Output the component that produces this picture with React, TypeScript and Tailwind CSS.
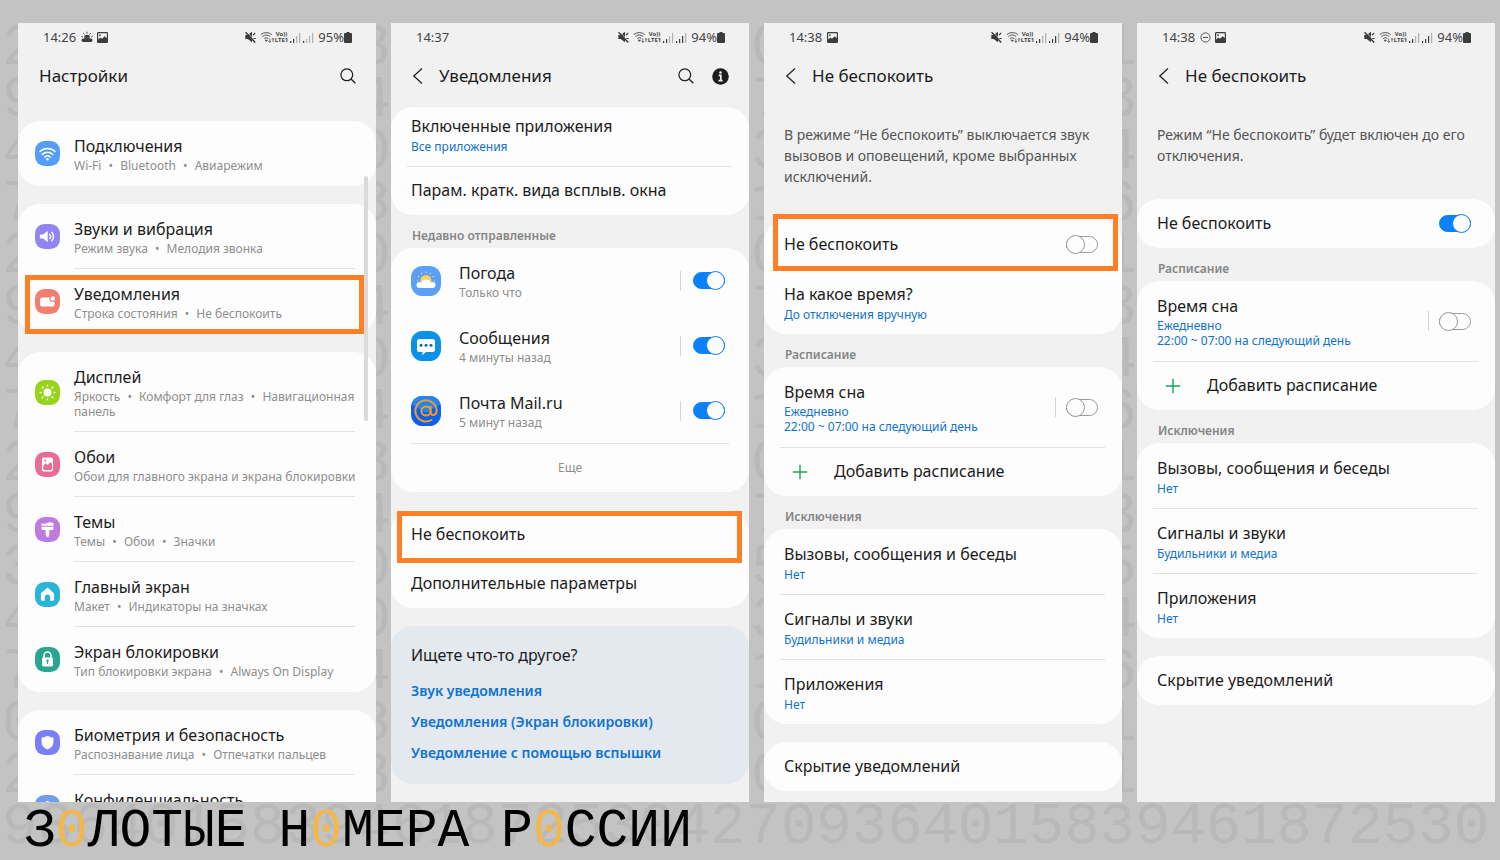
import React from 'react';

/* ---------- digit pattern behind the phones ---------- */

const GUTTERS = {
    left: '294729472934702',
    first: '840804048400488',
    second: '073107310753100',
    third: '134613461354611',
};

const BOTTOM_DIGITS = '936401583946187253042709364015839461872530';

interface GutterProps {
    digits: string;
    styleClass: string;
}

const Gutter: React.FC<GutterProps> = ({ digits, styleClass }) => (
    <div aria-hidden="true" className={`flex flex-col shrink-0 overflow-hidden font-['Liberation_Mono',monospace] text-[59px] leading-[52px] text-[#b9b9b9] select-none ${styleClass}`}>
        {digits.split('').map((digit, i) => (
            <span key={i}>{digit}</span>
        ))}
    </div>
);

/* ---------- status bar ---------- */

const WeatherStatusIcon = () => (
    <svg className="w-3 h-3" viewBox="0 0 12 12" fill="#3c3c3c">
        <path d="M3 6.800a3 3 0 0 1 6 0z" />
        <path d="M6 .8v1.600M2.400 2.200l1 1.200M9.600 2.200l-1 1.200M.4 5.400l1.500.5M11.600 5.400l-1.500.5" stroke="#3c3c3c" strokeWidth="1" />
        <path d="M2.200 11a1.700 1.700 0 0 1 0-3.400 2 2 0 0 1 1.600-.2 2.600 2.600 0 0 1 4.400 0 2 2 0 0 1 1.600.2 1.700 1.700 0 0 1 0 3.400z" />
    </svg>
);

const ImageStatusIcon = () => (
    <svg className="w-[11px] h-[11px]" viewBox="0 0 11 11">
        <path fillRule="evenodd" fill="#3c3c3c" d="M1.200 0h8.600A1.200 1.200 0 0 1 11 1.200v8.600A1.200 1.200 0 0 1 9.800 11H1.200A1.200 1.200 0 0 1 0 9.800V1.200A1.200 1.200 0 0 1 1.200 0zM1.200 1.200v6.200l2.300-2 1.500 1.400 2.700-2.600 2.100 2V1.200zM3 2.200a.9.9 0 1 1 0 1.800.9.9 0 0 1 0-1.800z" />
    </svg>
);

const DndStatusIcon = () => (
    <svg className="w-[11px] h-[11px]" viewBox="0 0 11 11" fill="none" stroke="#555">
        <circle cx="5.500" cy="5.500" r="4.600" />
        <path d="M3 5.500h5" />
    </svg>
);

const MuteIcon = () => (
    <svg className="w-[11px] h-3" viewBox="0 0 11 12">
        <path d="M.3 4h2.400L7 .8v10.400L2.700 8H.3z" fill="#3c3c3c" />
        <path d="M8 4.200l2.200-2.200M8 7.500h2.700" stroke="#3c3c3c" strokeWidth="1.200" />
        <path d="M1.400.6l9.400 10" stroke="#f1f1f1" strokeWidth=".9" />
        <path d="M.6 1.200l9.600 10.200" stroke="#3c3c3c" strokeWidth="1.500" />
    </svg>
);

const WifiStatusIcon = () => (
    <svg className="w-[15px] h-3" viewBox="0 0 15 12" fill="none" stroke="#555" strokeWidth="1">
        <path d="M.8 3.600a8.400 8.400 0 0 1 11 0M2.400 5.600a6 6 0 0 1 7.800 0M4.200 7.500a3.400 3.400 0 0 1 4.200 0" />
        <path d="M5.200 9.200l1.100 1.200 1.100-1.200z" fill="#555" />
        <path d="M9.800 7.500v4M8.600 10l1.200 1.400L11 10M13 11V7.500M12 8.600l1-1.200 1 1.200" strokeWidth=".8" />
    </svg>
);

const SignalIcon = ({ level }: { level: number }) => (
    <svg className="w-[11px] h-[11px]" viewBox="0 0 11 11">
        {[2, 4, 7, 10].map((h, i) => (
            <rect key={h} x={i * 3} y={11 - h} width="1.200" height={h} fill={i < level ? '#3c3c3c' : '#b0b0b0'} />
        ))}
    </svg>
);

const BatteryIcon = () => (
    <svg className="w-2 h-[11px]" viewBox="0 0 8 11" fill="#3c3c3c">
        <path d="M2.500 0h3v1H7a1 1 0 0 1 1 1v8a1 1 0 0 1-1 1H1a1 1 0 0 1-1-1V2a1 1 0 0 1 1-1h1.500z" />
    </svg>
);

interface StatusBarProps {
    time: string;
    battery: string;
    secondSignal: number;
    children?: React.ReactNode;
}

const StatusBar: React.FC<StatusBarProps> = ({ time, battery, secondSignal, children }) => (
    <div className="flex shrink-0 items-center justify-between h-7 pl-[25px] pr-6 text-[13px] leading-4 text-[#444]">
        <div className="flex items-center gap-x-1">
            <span className="mr-px">{time}</span>
            {children}
        </div>
        <div className="flex items-center">
            <MuteIcon />
            <span className="ml-1 flex"><WifiStatusIcon /></span>
            <span className="flex flex-col text-[6px] leading-[6px] font-bold text-center">
                <span>Vo))</span>
                <span>LTE1</span>
            </span>
            <span className="flex gap-x-0.5 ml-0.5 mr-1">
                <SignalIcon level={2} />
                <SignalIcon level={secondSignal} />
            </span>
            <span>{battery}</span>
            <BatteryIcon />
        </div>
    </div>
);

/* ---------- shared pieces ---------- */

const SearchIcon = () => (
    <svg className="w-4 h-4" viewBox="0 0 16 16" fill="none" stroke="#222" strokeWidth="1.300">
        <circle cx="6.800" cy="6.800" r="5.900" />
        <path d="M11 11l4.400 4.300" />
    </svg>
);

const InfoIcon = () => (
    <svg className="w-[17px] h-[17px]" viewBox="0 0 17 17">
        <circle cx="8.500" cy="8.500" r="8.300" fill="#1c1c1c" />
        <circle cx="8.500" cy="4.500" r="1.300" fill="#f1f1f1" />
        <path d="M6.700 7.400h2.100v5M6.500 12.600h4.200" fill="none" stroke="#f1f1f1" strokeWidth="1.700" />
    </svg>
);

interface TitleBarProps {
    title: string;
    back?: boolean;
    children?: React.ReactNode;
}

const TitleBar: React.FC<TitleBarProps> = ({ title, back, children }) => (
    <div className="flex shrink-0 items-center h-[50px] pl-[21px] pr-5">
        {back && (
            <button type="button" aria-label="Назад" className="w-[27px]">
                <svg className="w-[11px] h-4" viewBox="0 0 11 16" fill="none" stroke="#222" strokeWidth="1.300">
                    <path d="M10 .6L1.800 8l8.200 7.400" />
                </svg>
            </button>
        )}
        <h2 className="flex-1 text-[17px] leading-6 text-[#1c1c1c]">{title}</h2>
        <div className="flex items-center gap-x-[18px]">{children}</div>
    </div>
);

const Phone = ({ children }: { children: React.ReactNode }) => (
    <section className="relative flex flex-1 flex-col min-w-0 min-h-0 overflow-hidden bg-[#f1f1f1]">{children}</section>
);

const Card = ({ children }: { children: React.ReactNode }) => (
    <div className="shrink-0 rounded-[22px] bg-[#fdfdfd]">{children}</div>
);

const SectionTitle = ({ children }: { children: React.ReactNode }) => (
    <h3 className="shrink-0 h-[33px] pt-[13px] pl-[21px] text-[12px] leading-4 font-semibold text-[#858585]">{children}</h3>
);

const Separator = () => <div className="h-px -mb-px ml-4 mr-[17px] bg-[#e3e3e3]" />;

interface ToggleProps {
    id: string;
    on?: boolean;
}

const Toggle: React.FC<ToggleProps> = ({ id, on }) => (
    <input
        id={id}
        type="checkbox"
        role="switch"
        defaultChecked={on}
        className="relative shrink-0 appearance-none w-8 h-[17px] rounded-full border border-[#9a9a9a] bg-[#fdfdfd] checked:border-[#0a80fb] checked:bg-[#0a80fb] before:absolute before:-top-0.5 before:-left-px before:size-[19px] before:rounded-full before:border before:border-[#9a9a9a] before:bg-[#fdfdfd] checked:before:left-3 checked:before:border-[#0a80fb]"
    />
);

interface TextRowProps {
    title: string;
    sub?: string[];
}

// plain row, 49px tall without sub lines and 65px with one
const TextRow: React.FC<TextRowProps> = ({ title, sub = [] }) => (
    <a href="#" className={`block px-5 ${sub.length ? 'pt-3.5 pb-3' : 'py-[13px]'}`}>
        <span className={`block text-base text-[#1c1c1c] ${sub.length ? 'mb-0.5 leading-[22px]' : 'leading-[23px]'}`}>{title}</span>
        {sub.map((line) => (
            <span key={line} className="block text-[12px] leading-[15px] text-[#0f73cf]">{line}</span>
        ))}
    </a>
);

/* ---------- settings list ---------- */

const ICONS: Record<string, React.ReactNode> = {
    wifi: (
        <g fill="none" stroke="#fff" strokeWidth="1.600" strokeLinecap="round">
            <path d="M5 10.500a11 11 0 0 1 15 0M7.400 13.300a7.500 7.500 0 0 1 10.200 0M9.800 16a4 4 0 0 1 5.400 0" />
            <circle cx="12.500" cy="18.200" r=".5" fill="#fff" />
        </g>
    ),
    sound: (
        <g>
            <path d="M5.500 10.500h2.700l4.500-3.700v11.400l-4.500-3.700H5.500a.6.6 0 0 1-.6-.6v-2.800a.6.6 0 0 1 .6-.6z" fill="#fff" />
            <path d="M14.800 10.500a3.200 3.200 0 0 1 0 4M16.800 8.300a6.200 6.200 0 0 1 0 8.400" fill="none" stroke="#fff" strokeWidth="1.400" strokeLinecap="round" />
        </g>
    ),
    notification: (
        <g>
            <rect x="5" y="8.500" width="14.500" height="9" rx="2.600" fill="#fff" />
            <circle cx="17.800" cy="9.400" r="3.400" fill="#f07f70" />
            <circle cx="17.800" cy="9.400" r="2.200" fill="#fff" />
        </g>
    ),
    display: (
        <g stroke="#fff" strokeWidth="1.500" strokeLinecap="round">
            <circle cx="12.500" cy="12.500" r="3.200" fill="#fff" />
            <path d="M12.500 5.200v.8M12.500 19v.8M5.200 12.500H6M19 12.500h.8M7.300 7.300l.6.6M17.100 17.100l.6.6M7.300 17.700l.6-.6M17.100 7.900l.6-.6" />
        </g>
    ),
    wallpaper: (
        <g>
            <rect x="7" y="5.500" width="11" height="14" rx="1.800" fill="#fff" />
            <path d="M8.300 13.500l2.600-2.200 1.800 1.700 2.600-2.800 1.700 1.700v5a1 1 0 0 1-1 1H9.300a1 1 0 0 1-1-1z" fill="#e86c93" />
            <circle cx="10.300" cy="8.500" r="1" fill="#e86c93" />
        </g>
    ),
    themes: (
        <g fill="#fff">
            <path d="M6.500 6.200q3 1.300 6-.2t6 .2v2.600h-12z" />
            <path d="M6.500 9.800h12v1.700a1.500 1.500 0 0 1-1.500 1.500h-2.700v5.200a1.800 1.800 0 0 1-3.600 0V13H8a1.500 1.500 0 0 1-1.500-1.500z" />
        </g>
    ),
    home: (
        <path d="M12.500 5.500l6 5.300c.4.3.6.7.6 1.200v5.400c0 .8-.6 1.400-1.400 1.400h-2.500v-3.600a2.700 2.700 0 0 0-5.400 0v3.600H7.300c-.8 0-1.400-.6-1.400-1.400V12c0-.5.2-.9.6-1.200z" fill="#fff" />
    ),
    lock: (
        <g>
            <path d="M9 11V8.500a3.500 3.500 0 0 1 7 0V11" fill="none" stroke="#fff" strokeWidth="1.500" />
            <rect x="7" y="10.500" width="11" height="9" rx="1.400" fill="#fff" />
            <path d="M12.500 14v3" stroke="#2ba590" strokeWidth="1.100" />
            <circle cx="12.500" cy="13.700" r="1.200" fill="#2ba590" />
        </g>
    ),
    shield: (
        <path d="M12.500 5.800c2 1.300 3.800 1.700 5.900 1.800v4.600c0 3.500-2.300 5.900-5.900 7.400-3.600-1.500-5.900-3.900-5.900-7.400V7.600c2.100-.1 3.900-.5 5.900-1.800z" fill="#fff" />
    ),
};

interface SettingsItem {
    title: string;
    sub: string[];
    icon: string;
    color: string;
    marked?: boolean;
}

const SETTINGS: SettingsItem[][] = [
    [{ title: 'Подключения', sub: ['Wi-Fi', 'Bluetooth', 'Авиарежим'], icon: 'wifi', color: '#549dfb' }],
    [
        { title: 'Звуки и вибрация', sub: ['Режим звука', 'Мелодия звонка'], icon: 'sound', color: '#9285f0' },
        { title: 'Уведомления', sub: ['Строка состояния', 'Не беспокоить'], icon: 'notification', color: '#f07f70', marked: true },
    ],
    [
        { title: 'Дисплей', sub: ['Яркость', 'Комфорт для глаз', 'Навигационная панель'], icon: 'display', color: '#97d41c' },
        { title: 'Обои', sub: ['Обои для главного экрана и экрана блокировки'], icon: 'wallpaper', color: '#e86c93' },
        { title: 'Темы', sub: ['Темы', 'Обои', 'Значки'], icon: 'themes', color: '#bf7ae0' },
        { title: 'Главный экран', sub: ['Макет', 'Индикаторы на значках'], icon: 'home', color: '#2ab5d8' },
        { title: 'Экран блокировки', sub: ['Тип блокировки экрана', 'Always On Display'], icon: 'lock', color: '#2ba590' },
    ],
    [
        { title: 'Биометрия и безопасность', sub: ['Распознавание лица', 'Отпечатки пальцев'], icon: 'shield', color: '#7a7ff8' },
        { title: 'Конфиденциальность', sub: [], icon: 'shield', color: '#6f9df0' },
    ],
];

const SettingsRow: React.FC<{ item: SettingsItem; last: boolean }> = ({ item, last }) => (
    <a href="#" className="relative flex items-center gap-x-3.5 pl-[17px] pr-[21px]">
        <svg className="shrink-0 w-[25px] h-[25px]" viewBox="0 0 25 25">
            <rect width="25" height="25" rx="9.500" fill={item.color} />
            {ICONS[item.icon]}
        </svg>
        <span className={`flex-1 min-h-[65px] pt-3.5 pb-3 border-b ${last ? 'border-transparent' : 'border-[#e3e3e3]'}`}>
            <span className="block mb-px text-base leading-[22px] text-[#1c1c1c]">{item.title}</span>
            <span className="block -mr-4 text-[12px] leading-[15px] text-[#8e8e8e]">
                {item.sub.map((part, i) => (
                    <React.Fragment key={part}>
                        {i > 0 && <> <span className="mx-1">•</span> </>}
                        {part}
                    </React.Fragment>
                ))}
            </span>
        </span>
        {item.marked && <span className="absolute z-10 top-1.5 bottom-0 left-[7px] right-3 border-5 border-[#ff7f27]" />}
    </a>
);

const SettingsPhone = () => (
    <Phone>
        <StatusBar time="14:26" battery="95%" secondSignal={1}>
            <WeatherStatusIcon />
            <ImageStatusIcon />
        </StatusBar>
        <TitleBar title="Настройки">
            <button type="button" aria-label="Поиск"><SearchIcon /></button>
        </TitleBar>
        <div className="flex flex-col gap-y-[18px] mt-5">
            {SETTINGS.map((group) => (
                <Card key={group[0].title}>
                    {group.map((item, i) => (
                        <SettingsRow key={item.title} item={item} last={i === group.length - 1} />
                    ))}
                </Card>
            ))}
        </div>
        <div className="absolute top-[153px] right-2 w-1 h-[245px] rounded-full bg-[#dadada]" />
    </Phone>
);

/* ---------- notifications ---------- */

const WeatherIcon = () => (
    <svg className="w-[30px] h-[30px]" viewBox="0 0 30 30">
        <rect width="30" height="30" rx="11.500" fill="#5b9ff8" />
        <circle cx="15" cy="14.500" r="5.500" fill="#fcd25c" />
        <path d="M15 5.500v1.600M10.300 6.800l.8 1.400M19.700 6.800l-.8 1.400M7 10.300l1.400.8M23 10.300l-1.400.8M6 15h1.200M24 15h-1.200" stroke="#fcd25c" strokeWidth="1.200" />
        <path d="M8.500 22a3 3 0 0 1 0-6c.7 0 1.200.2 1.700.5a5.400 5.400 0 0 1 9.600 0c.5-.3 1-.5 1.700-.5a3 3 0 0 1 0 6z" fill="#fff" />
    </svg>
);

const MessagesIcon = () => (
    <svg className="w-[30px] h-[30px]" viewBox="0 0 30 30">
        <rect width="30" height="30" rx="11.500" fill="#0a91ea" />
        <path d="M8.500 8h13A2.500 2.500 0 0 1 24 10.500v8a2.500 2.500 0 0 1-2.500 2.500H15l-3.500 3.200V21h-3A2.500 2.500 0 0 1 6 18.500v-8A2.500 2.500 0 0 1 8.500 8z" fill="#fff" />
        <g fill="#0f66b8">
            <circle cx="10" cy="14.300" r="1.500" />
            <circle cx="15" cy="14.300" r="1.500" />
            <circle cx="20" cy="14.300" r="1.500" />
        </g>
    </svg>
);

const MailIcon = () => (
    <svg className="w-[30px] h-[30px]" viewBox="0 0 30 30">
        <rect width="30" height="30" rx="11.500" fill="#0c60f0" />
        <path d="M12 0h6c6 0 10 3 11.500 8L15 17 .5 8C2 3 6 0 12 0z" fill="#2485f7" />
        <g fill="none" stroke="#f79a1c" strokeWidth="2" strokeLinecap="round">
            <circle cx="15" cy="15" r="4.600" />
            <path d="M19.600 10.800V16c0 4.300 6 4.200 6-1A10.600 10.600 0 1 0 20.500 24" />
        </g>
    </svg>
);

const APPS = [
    { id: 'weather', title: 'Погода', sub: 'Только что', icon: <WeatherIcon /> },
    { id: 'messages', title: 'Сообщения', sub: '4 минуты назад', icon: <MessagesIcon /> },
    { id: 'mail', title: 'Почта Mail.ru', sub: '5 минут назад', icon: <MailIcon /> },
];

const NotificationsPhone = () => (
    <Phone>
        <StatusBar time="14:37" battery="94%" secondSignal={3} />
        <TitleBar title="Уведомления" back>
            <button type="button" aria-label="Поиск"><SearchIcon /></button>
            <button type="button" aria-label="Сведения"><InfoIcon /></button>
        </TitleBar>
        <div className="mt-1.5">
            <Card>
                {/* the list is scrolled a bit, so the first row loses its top padding */}
                <div className="pt-2 *:pt-0"><TextRow title="Включенные приложения" sub={['Все приложения']} /></div>
                <Separator />
                <TextRow title="Парам. кратк. вида всплыв. окна" />
            </Card>
            <SectionTitle>Недавно отправленные</SectionTitle>
            <Card>
                {APPS.map((app) => (
                    <div key={app.id} className="flex items-center h-[65px] pl-5 pr-6">
                        {app.icon}
                        <label htmlFor={app.id} className="flex-1 ml-[18px]">
                            <span className="block mb-px text-base leading-[22px] text-[#1c1c1c]">{app.title}</span>
                            <span className="block text-[12px] leading-[15px] text-[#8e8e8e]">{app.sub}</span>
                        </label>
                        <span className="w-px h-5 mr-3 bg-[#d5d5d5]" />
                        <Toggle id={app.id} on />
                    </div>
                ))}
                <div className="h-px mx-5 bg-[#e3e3e3]" />
                <button type="button" className="block w-full h-12 text-[12px] leading-4 text-[#8e8e8e]">Еще</button>
            </Card>
            <div className="flex flex-col gap-y-[18px] mt-[18px]">
                <Card>
                    <div className="relative">
                        <TextRow title="Не беспокоить" />
                        <span className="absolute top-px -bottom-1 left-1.5 right-[7px] border-5 border-[#ff7f27]" />
                    </div>
                    <TextRow title="Дополнительные параметры" />
                </Card>
                <div className="px-5 pt-[18px] pb-4 rounded-[22px] bg-[#e3e9ef]">
                    <h3 className="mb-2 text-base leading-[23px] text-[#1c1c1c]">Ищете что-то другое?</h3>
                    <nav className="flex flex-col items-start text-[14px] leading-[31px] font-semibold text-[#0f73cf]">
                        <a href="#">Звук уведомления</a>
                        <a href="#">Уведомления (Экран блокировки)</a>
                        <a href="#">Уведомление с помощью вспышки</a>
                    </nav>
                </div>
            </div>
        </div>
    </Phone>
);

/* ---------- do not disturb ---------- */

interface DndPhoneProps {
    id: string;
    on?: boolean;
    description: string;
    statusIcons: React.ReactNode;
}

const DndPhone: React.FC<DndPhoneProps> = ({ id, on, description, statusIcons }) => (
    <Phone>
        <StatusBar time="14:38" battery="94%" secondSignal={3}>{statusIcons}</StatusBar>
        <TitleBar title="Не беспокоить" back />
        <p className="shrink-0 mt-[23px] mb-[33px] px-5 text-[14px] leading-[21px] text-[#555]">{description}</p>
        <Card>
            <div className="relative flex items-center h-[49px] pl-5 pr-6">
                <label htmlFor={`${id}-dnd`} className="flex-1 text-base leading-[23px] text-[#1c1c1c]">Не беспокоить</label>
                <Toggle id={`${id}-dnd`} on={on} />
                {!on && <span className="absolute -top-1.5 -bottom-0.5 left-[9px] right-1 border-5 border-[#ff7f27] pointer-events-none" />}
            </div>
            {!on && <TextRow title="На какое время?" sub={['До отключения вручную']} />}
        </Card>
        <SectionTitle>Расписание</SectionTitle>
        <Card>
            <div className="flex items-center h-20 pl-5 pr-6">
                <label htmlFor={`${id}-sleep`} className="flex-1">
                    <span className="block mb-px text-base leading-[22px] text-[#1c1c1c]">Время сна</span>
                    <span className="block text-[12px] leading-[15px] text-[#0f73cf]">Ежедневно</span>
                    <span className="block text-[12px] leading-[15px] text-[#0f73cf]">22:00 ~ 07:00 на следующий день</span>
                </label>
                <span className="w-px h-5 mr-2.5 bg-[#d5d5d5]" />
                <Toggle id={`${id}-sleep`} />
            </div>
            <Separator />
            <button type="button" className="flex items-center w-full h-[49px] pl-7 gap-x-[26px] text-base leading-[23px] text-[#1c1c1c]">
                <svg className="w-4 h-4" viewBox="0 0 16 16" stroke="#14a651" strokeWidth="1.400">
                    <path d="M8 .8v14.400M.8 8h14.400" />
                </svg>
                Добавить расписание
            </button>
        </Card>
        <SectionTitle>Исключения</SectionTitle>
        <Card>
            <TextRow title="Вызовы, сообщения и беседы" sub={['Нет']} />
            <Separator />
            <TextRow title="Сигналы и звуки" sub={['Будильники и медиа']} />
            <Separator />
            <TextRow title="Приложения" sub={['Нет']} />
        </Card>
        <div className="shrink-0 mt-[18px]">
            <Card>
                <TextRow title="Скрытие уведомлений" />
            </Card>
        </div>
    </Phone>
);

const Zero = () => <span className="text-[#f2b84b]">0</span>;

const App = () => (
    <div className="flex flex-col h-screen overflow-hidden bg-[#c3c3c3] font-['Noto_Sans',sans-serif]">
        <main className="flex flex-1 min-h-0 pt-[23px] pr-[5px]">
            <Gutter digits={GUTTERS.left} styleClass="w-[18px] pl-0.5 items-start" />
            <SettingsPhone />
            <Gutter digits={GUTTERS.first} styleClass="w-[15px] items-end" />
            <NotificationsPhone />
            <Gutter digits={GUTTERS.second} styleClass="w-[15px] pl-0.5 items-start" />
            <DndPhone
                id="off"
                description="В режиме “Не беспокоить” выключается звук вызовов и оповещений, кроме выбранных исключений."
                statusIcons={<ImageStatusIcon />}
            />
            <Gutter digits={GUTTERS.third} styleClass="w-[15px] items-end" />
            <DndPhone
                id="on"
                on
                description="Режим “Не беспокоить” будет включен до его отключения."
                statusIcons={<><DndStatusIcon /><ImageStatusIcon /></>}
            />
        </main>
        <footer className="relative shrink-0 h-[58px] pl-6 font-['Liberation_Mono',monospace] whitespace-nowrap">
            <div aria-hidden="true" className="absolute top-0 left-0.5 text-[59px] leading-[52px] text-[#b9b9b9] select-none">{BOTTOM_DIGITS}</div>
            <h1 className="relative text-[53px] leading-[60px] text-black">
                З<Zero />ЛОТЫЕ Н<Zero />МЕРА Р<Zero />ССИИ
            </h1>
        </footer>
    </div>
);

export default App;
